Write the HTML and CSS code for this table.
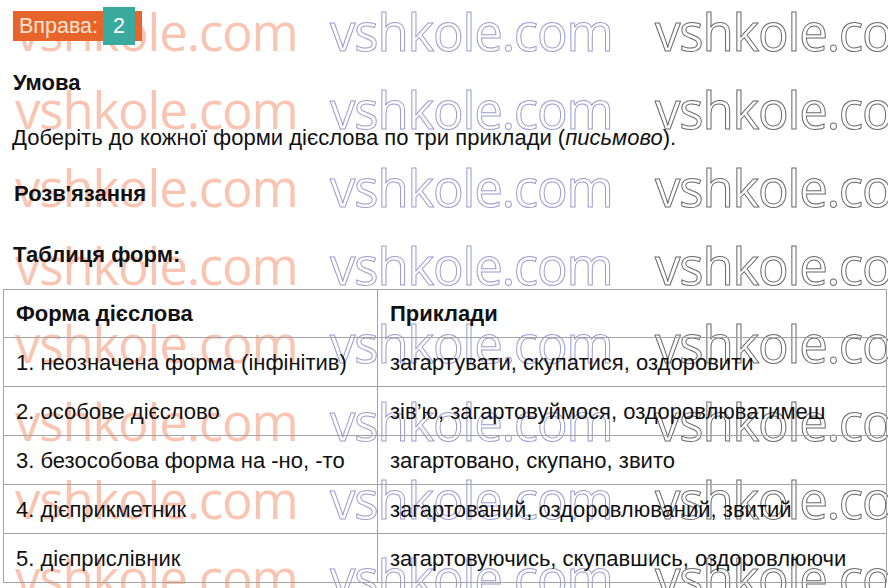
FILE: index.html
```html
<!DOCTYPE html>
<html lang="uk">
<head>
    <meta charset="UTF-8">
    <meta name="viewport" content="width=device-width, initial-scale=1.0">
    <title>Вправа 2</title>
    <link rel="stylesheet" href="styles.css">
</head>
<body>

    <!-- водяні знаки -->
    <div class="watermark" aria-hidden="true">
        <span class="wm-fill">vshkole.com</span><span class="wm-line">vshkole.com</span><span class="wm-gray">vshkole.com</span>
        <span class="wm-fill">vshkole.com</span><span class="wm-line">vshkole.com</span><span class="wm-gray">vshkole.com</span>
        <span class="wm-fill">vshkole.com</span><span class="wm-line">vshkole.com</span><span class="wm-gray">vshkole.com</span>
        <span class="wm-fill">vshkole.com</span><span class="wm-line">vshkole.com</span><span class="wm-gray">vshkole.com</span>
        <span class="wm-fill">vshkole.com</span><span class="wm-line">vshkole.com</span><span class="wm-gray">vshkole.com</span>
        <span class="wm-fill">vshkole.com</span><span class="wm-line">vshkole.com</span><span class="wm-gray">vshkole.com</span>
        <span class="wm-fill">vshkole.com</span><span class="wm-line">vshkole.com</span><span class="wm-gray">vshkole.com</span>
        <span class="wm-fill">vshkole.com</span><span class="wm-line">vshkole.com</span><span class="wm-gray">vshkole.com</span>
    </div>

    <div class="page">
        <div class="badge">
            <span class="badge-label">Вправа:</span>
            <span class="badge-num">2</span>
        </div>

        <h3 class="title title-cond">Умова</h3>
        <p class="task">Доберіть до кожної форми дієслова по три приклади (<em>письмово</em>).</p>

        <h3 class="title title-sol">Розв'язання</h3>
        <h3 class="title title-table">Таблиця форм:</h3>

        <table class="forms">
            <thead>
                <tr>
                    <th class="col-form">Форма дієслова</th>
                    <th>Приклади</th>
                </tr>
            </thead>
            <tbody>
                <tr>
                    <td>1. неозначена форма (інфінітив)</td>
                    <td>загартувати, скупатися, оздоровити</td>
                </tr>
                <tr>
                    <td>2. особове дієслово</td>
                    <td>зів’ю, загартовуймося, оздоровлюватимеш</td>
                </tr>
                <tr>
                    <td>3. безособова форма на -но, -то</td>
                    <td>загартовано, скупано, звито</td>
                </tr>
                <tr>
                    <td>4. дієприкметник</td>
                    <td>загартований, оздоровлюваний, звитий</td>
                </tr>
                <tr>
                    <td>5. дієприслівник</td>
                    <td>загартовуючись, скупавшись, оздоровлюючи</td>
                </tr>
            </tbody>
        </table>
    </div>

</body>
</html>
```

FILE: styles.css
```css
/* --- загальне --- */
body {
    font-family: 'Liberation Sans', Arial, sans-serif;
    font-size: 22px;
    line-height: 25px;
    color: #111;
    background-color: #fff;
    margin: 0;
    position: relative;
    width: 888px;
    height: 588px;
    overflow: hidden;
}

.page {
    position: relative;
    z-index: 1;
    padding: 7px 0 0 3px;
}

/* --- бейдж "Вправа" --- */
.badge {
    display: inline-flex;
    align-items: center;
    height: 30px;
    margin: 4px 0 4px 10px;
    padding: 0 7px 0 6px;
    background-color: #e7652b;
    vertical-align: top;
}

.badge-label {
    color: #fde2cf;
    font-size: 21.5px;
    margin-right: 5px;
}

.badge-num {
    display: flex;
    align-items: center;
    justify-content: center;
    width: 32px;
    height: 38px;
    background-color: #3aa99e;
    color: #fff;
    font-size: 21.5px;
}

/* --- заголовки і текст --- */
.title {
    font-size: 22px;
    font-weight: 700;
    margin: 0;
    padding-left: 10px;
}

.title-cond {
    margin-top: 25px;
}

.task {
    margin: 30px 0 0;
    padding-left: 9px;
}

.title-sol {
    margin-top: 31px;
    padding-left: 11px;
}

.title-table {
    margin-top: 36px;
}

/* --- таблиця --- */
.forms {
    width: 884px;
    margin-top: 22px;
    border-collapse: collapse;
}

.forms th,
.forms td {
    border: 1px solid #a3a3a3;
    padding: 12px 11px 11px 12px;
    text-align: left;
    vertical-align: middle;
    white-space: nowrap;
}

.forms th {
    font-weight: 700;
    padding-top: 11px;
}

.forms .col-form {
    width: 350px;
}

/* --- водяні знаки --- */
.watermark {
    position: absolute;
    top: -8px;
    left: 15px;
    z-index: 0;
    display: grid;
    grid-template-columns: 315px 325px 300px;
    grid-auto-rows: 78px;
    font-family: 'Open Sans', sans-serif;
    font-size: 51px;
    line-height: 78px;
    letter-spacing: -1.2px;
    pointer-events: none;
    white-space: nowrap;
}

.wm-fill {
    color: #fac4b2;
}

.wm-line {
    color: transparent;
    -webkit-text-stroke: 1px #9d9ccf;
}

.wm-gray {
    color: transparent;
    -webkit-text-stroke: 1px #6a6a6a;
}
```
